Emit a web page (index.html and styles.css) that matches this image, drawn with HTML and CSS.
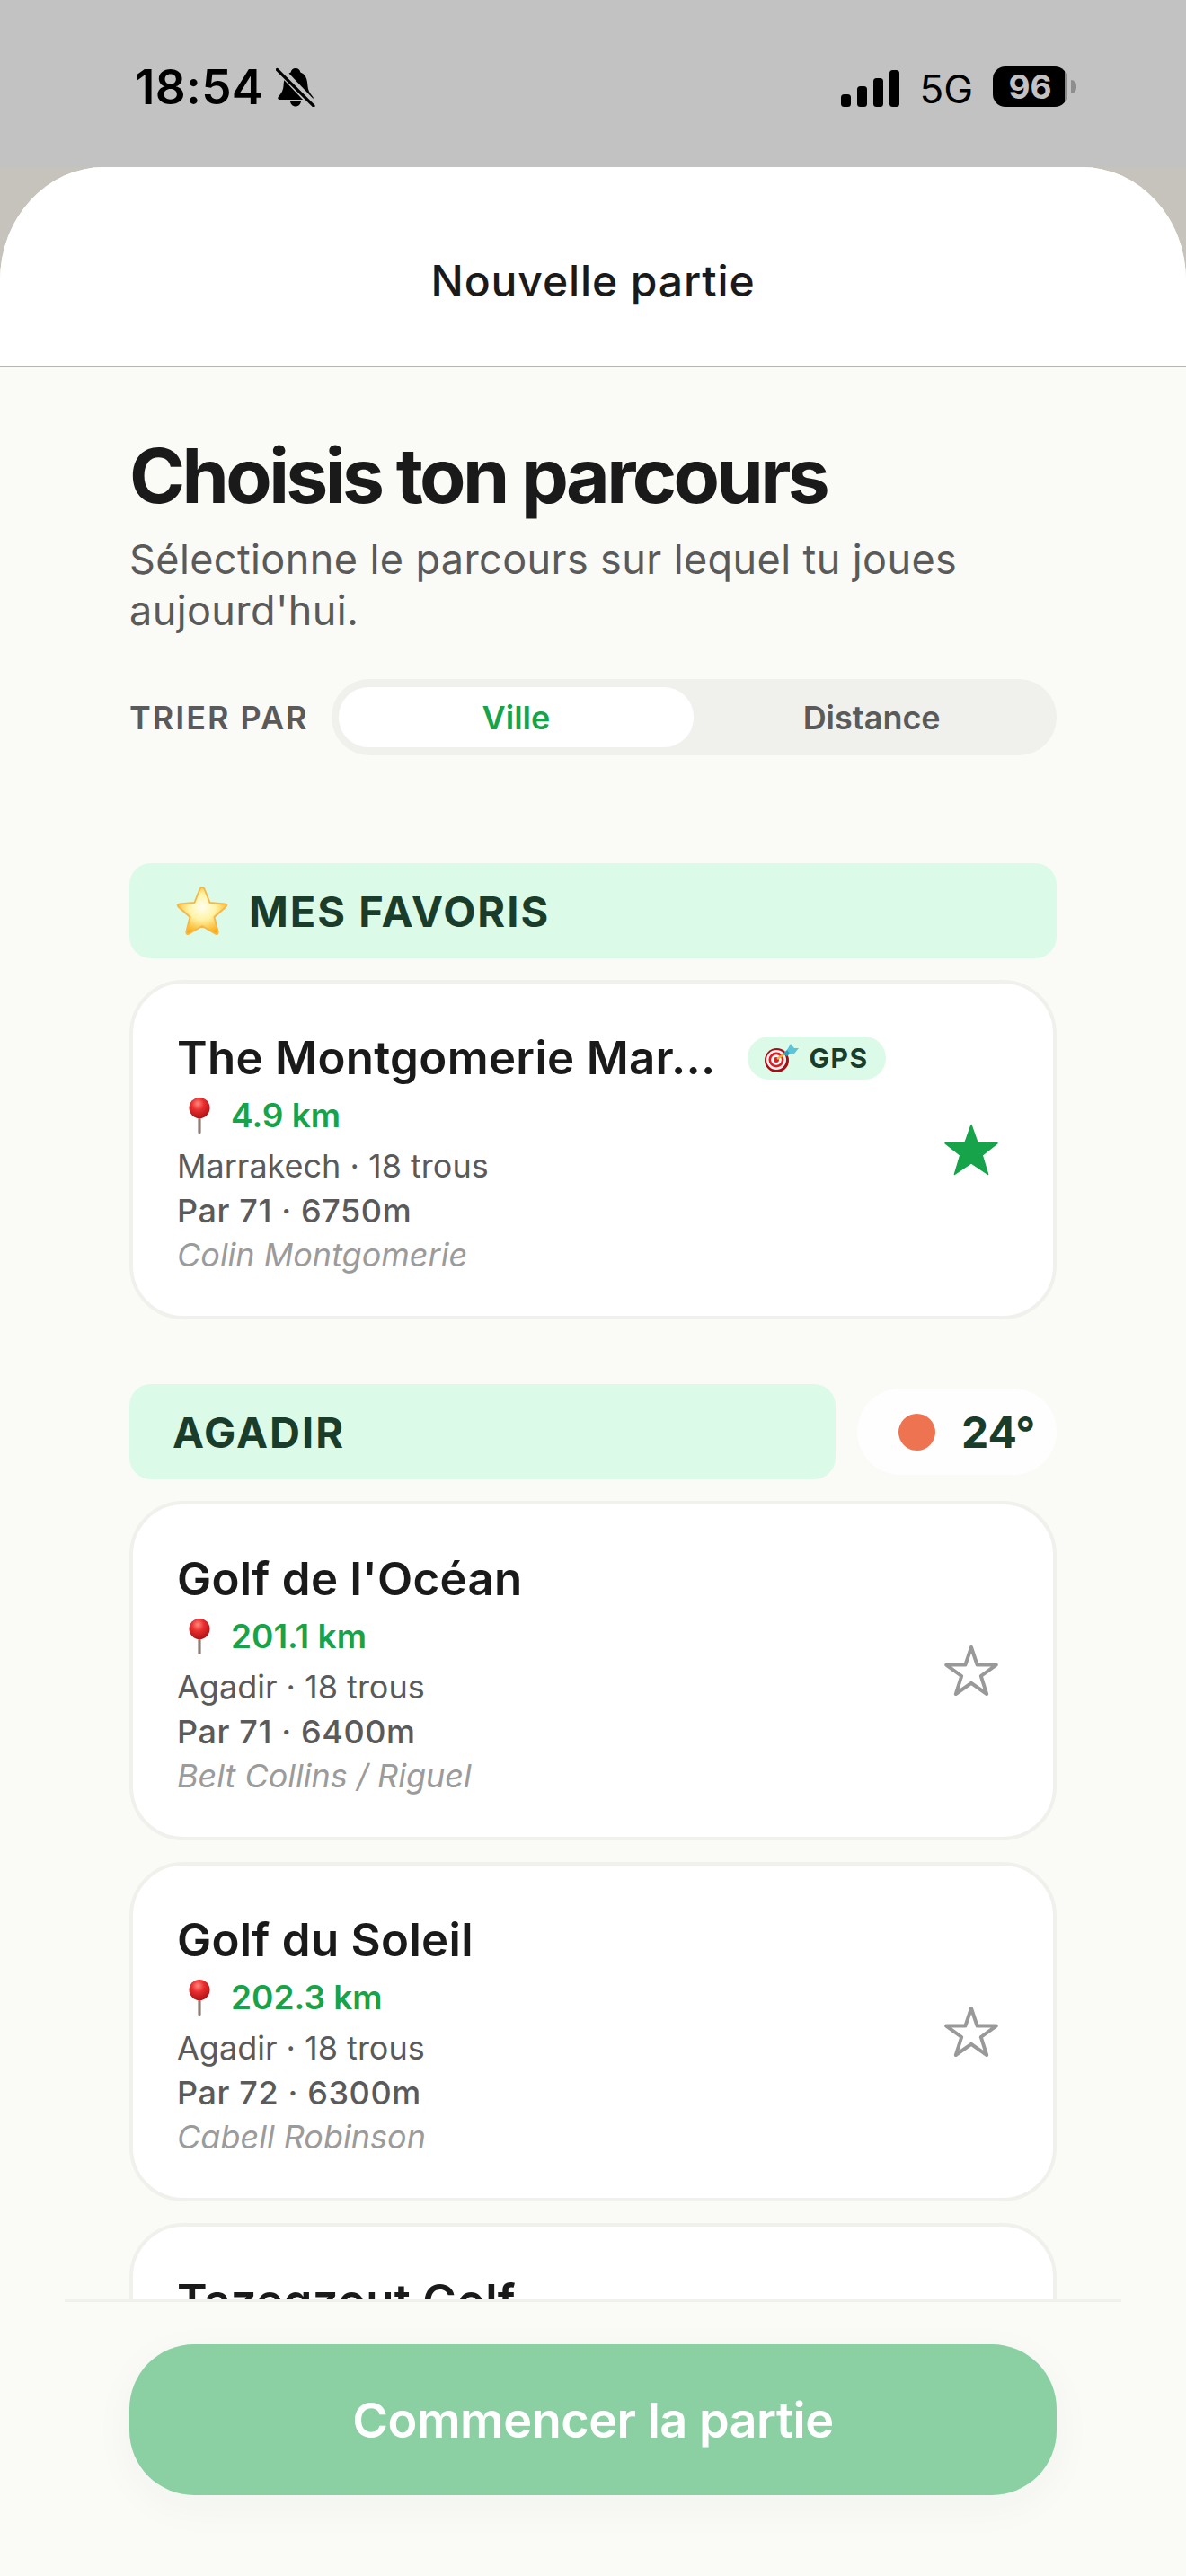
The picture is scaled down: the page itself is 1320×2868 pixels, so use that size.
FILE: index.html
```html
<!DOCTYPE html>
<html lang="fr">
<head>
  <meta charset="UTF-8">
  <meta name="viewport" content="width=device-width, initial-scale=1.0">
  <title>Nouvelle partie</title>
  <link rel="stylesheet" href="styles.css">
</head>
<body>

<svg class="defs" width="0" height="0">
  <defs>
    <radialGradient id="pinBall" cx="0.42" cy="0.3" r="0.75">
      <stop offset="0" stop-color="#ff8a80"/>
      <stop offset="0.4" stop-color="#ea2e2e"/>
      <stop offset="1" stop-color="#a50f14"/>
    </radialGradient>
    <radialGradient id="starFill" cx="0.5" cy="0.42" r="0.6">
      <stop offset="0" stop-color="#fffef0"/>
      <stop offset="0.45" stop-color="#fff4a8"/>
      <stop offset="1" stop-color="#f9a90f"/>
    </radialGradient>
    <symbol id="pin" viewBox="0 0 24 40">
      <rect x="10.4" y="18" width="3.2" height="22" rx="1.2" fill="#8b7d74"/>
      <circle cx="12" cy="11.5" r="11.5" fill="url(#pinBall)"/>
    </symbol>
    <symbol id="star-line" viewBox="0 0 62 58">
      <path d="M31 3 L37.6 22.6 L58.8 22.6 L41.8 35 L48.2 55 L31 42.8 L13.8 55 L20.2 35 L3.2 22.6 L24.4 22.6 Z" fill="none" stroke="#999" stroke-width="4" stroke-linejoin="round"/>
    </symbol>
  </defs>
</svg>

<div class="app">
  <div class="status-bar">
    <div class="status-left">
      <span class="clock">18:54</span>
      <svg class="bell" viewBox="0 0 44 44">
        <path d="M22 1c3 0 5 2 5.4 4.6C33 7.6 35 13 35.400 20c.3 5 2 8.500 5.600 12.500 1.500 1.700.6 3.500-1.500 3.500H4.500c-2.100 0-3-1.800-1.500-3.500C6.600 28.500 8.300 25 8.600 20 9 13 11 7.600 16.600 5.600 17 3 19 1 22 1z" fill="#000"/>
        <path d="M16 38h12c-.6 3.300-3 5.500-6 5.500s-5.400-2.200-6-5.500z" fill="#000"/>
        <path d="M3 1 L42 42" stroke="#c2c2c2" stroke-width="9"/>
        <path d="M1.500 2.500 L42 43" stroke="#000" stroke-width="3.200" stroke-linecap="round"/>
      </svg>
    </div>
    <div class="status-right">
      <svg class="signal" viewBox="0 0 65 41">
        <rect x="0" y="27" width="11" height="14" rx="3.500"/>
        <rect x="18" y="18" width="11" height="23" rx="3.500"/>
        <rect x="36" y="9" width="11" height="32" rx="3.500"/>
        <rect x="54" y="0" width="11" height="41" rx="3.500"/>
      </svg>
      <span class="network">5G</span>
      <span class="battery"><span class="battery-level">96</span></span>
    </div>
  </div>

  <div class="sheet">
    <header class="sheet-header">Nouvelle partie</header>

    <main class="content">
      <h1>Choisis ton parcours</h1>
      <p class="intro">Sélectionne le parcours sur lequel tu joues aujourd'hui.</p>

      <div class="sort-row">
        <span class="sort-label">TRIER PAR</span>
        <div class="segments">
          <button class="segment active">Ville</button>
          <button class="segment">Distance</button>
        </div>
      </div>

      <section class="group first">
        <div class="group-head">
          <h2 class="group-title">
            <svg class="emoji-star" viewBox="0 0 60 57">
              <path d="M30 2 Q32 2 33 5 L38.500 19 L55 20.500 Q59 21 56 24 L43.500 35 L47.500 51 Q48 55 44.500 53.500 L30 45 L15.500 53.500 Q12 55 12.500 51 L16.500 35 L4 24 Q1 21 5 20.500 L21.500 19 L27 5 Q28 2 30 2 Z" fill="url(#starFill)" stroke="#f5b84a" stroke-width="2" stroke-linejoin="round"/>
            </svg>
            MES FAVORIS
          </h2>
        </div>
        <article class="card">
          <div class="card-info">
            <div class="card-title-row">
              <h3 class="card-title">The Montgomerie Mar...</h3>
              <span class="gps-badge">
                <svg class="emoji-dart" viewBox="0 0 38 32">
                  <circle cx="13.500" cy="18.500" r="13.500" fill="#a80d16"/>
                  <circle cx="13" cy="18" r="11" fill="#f2f2f2"/>
                  <circle cx="13" cy="18" r="8.500" fill="#d81f26"/>
                  <circle cx="13" cy="18" r="5.800" fill="#fff"/>
                  <circle cx="13" cy="18" r="3" fill="#d81f26"/>
                  <path d="M14 17 L24 10" stroke="#e8b83a" stroke-width="2.600"/>
                  <path d="M20 11.500 L26 6 L29.500 10 L25 14 Z" fill="#2f9fbe"/>
                  <path d="M25 7 L29 0 L33 5 L38 5 L33 11 L28 11 Z" fill="#5cc4d8"/>
                </svg>
                GPS
              </span>
            </div>
            <div class="card-distance"><svg class="emoji-pin"><use href="#pin"/></svg>4.9 km</div>
            <div class="card-place">Marrakech · 18 trous</div>
            <div class="card-stats">Par 71 · 6750m</div>
            <div class="card-designer">Colin Montgomerie</div>
          </div>
          <svg class="fav-star" viewBox="0 0 62 58">
            <path d="M31 1.500 L38.200 21.800 L60 21.800 L43.200 35.200 L49.600 56.500 L31 44 L12.400 56.500 L18.800 35.200 L2 21.800 L23.800 21.800 Z" fill="#16a34a" stroke="#16a34a" stroke-width="1.500" stroke-linejoin="round"/>
          </svg>
        </article>
      </section>

      <section class="group">
        <div class="group-head">
          <h2 class="group-title">AGADIR</h2>
          <div class="weather"><span class="weather-dot"></span><span>24°</span></div>
        </div>
        <article class="card">
          <div class="card-info">
            <h3 class="card-title">Golf de l'Océan</h3>
            <div class="card-distance"><svg class="emoji-pin"><use href="#pin"/></svg>201.1 km</div>
            <div class="card-place">Agadir · 18 trous</div>
            <div class="card-stats">Par 71 · 6400m</div>
            <div class="card-designer">Belt Collins / Riguel</div>
          </div>
          <svg class="fav-star"><use href="#star-line"/></svg>
        </article>
        <article class="card">
          <div class="card-info">
            <h3 class="card-title">Golf du Soleil</h3>
            <div class="card-distance"><svg class="emoji-pin"><use href="#pin"/></svg>202.3 km</div>
            <div class="card-place">Agadir · 18 trous</div>
            <div class="card-stats">Par 72 · 6300m</div>
            <div class="card-designer">Cabell Robinson</div>
          </div>
          <svg class="fav-star"><use href="#star-line"/></svg>
        </article>
        <article class="card">
          <div class="card-info">
            <h3 class="card-title">Tazegzout Golf</h3>
          </div>
        </article>
      </section>
    </main>

    <footer class="footer">
      <button class="start-btn">Commencer la partie</button>
    </footer>
  </div>
</div>

</body>
</html>
```

FILE: styles.css
```css
* {
  box-sizing: border-box;
}

body {
  margin: 0;
  font-family: Inter, "Noto Sans", sans-serif;
  background-color: #c6c3bd;
  color: #1a1a1a;
}

.defs {
  position: absolute;
}

.app {
  display: flex;
  flex-direction: column;
  height: 2868px;
  overflow: hidden;
}

/* Status bar */
.status-bar {
  display: flex;
  justify-content: space-between;
  height: 186px;
  flex-shrink: 0;
  padding: 74px 132px 0 150px;
  background-color: #c2c2c2;
  color: #000;
}

.status-left,
.status-right {
  display: flex;
  height: 45px;
  align-items: center;
}

.clock {
  font-size: 53px;
  font-weight: 600;
  letter-spacing: 0.3px;
}

.bell {
  width: 44px;
  height: 44px;
  margin: 1px 0 0 14px;
}

.signal {
  width: 65px;
  height: 41px;
  margin-top: 4px;
}

.network {
  margin: 4px 0 0 22px;
  font-size: 44px;
  font-weight: 400;
}

.battery {
  position: relative;
  width: 83px;
  height: 45px;
  margin-left: 22px;
  border-radius: 14px;
  background: linear-gradient(to right, #000 96%, #8a8a8a 96%);
  text-align: center;
}

.battery::after {
  content: "";
  position: absolute;
  top: 15px;
  right: -10px;
  width: 6px;
  height: 15px;
  border-radius: 0 6px 6px 0;
  background-color: #8e8e8e;
}

.battery-level {
  font-size: 37px;
  font-weight: 700;
  line-height: 45px;
  color: #c2c2c2;
}

/* Sheet */
.sheet {
  display: flex;
  flex-direction: column;
  flex: 1;
  min-height: 0;
  border-radius: 116px 116px 0 0 / 126px 126px 0 0;
  overflow: hidden;
  background-color: #fafbf6;
}

.sheet-header {
  height: 223px;
  flex-shrink: 0;
  padding-top: 98px;
  border-bottom: 2px solid #b6b6b2;
  background-color: #fff;
  font-size: 48px;
  font-weight: 500;
  line-height: 58px;
  letter-spacing: 0.9px;
  text-align: center;
}

.content {
  flex: 1;
  min-height: 0;
  overflow: hidden;
  padding: 71px 144px 0;
}

h1 {
  margin: 0;
  font-size: 84px;
  font-weight: 700;
  line-height: 100px;
  letter-spacing: -3.6px;
}

.intro {
  margin: 14px 0 0;
  font-size: 45px;
  line-height: 57px;
  letter-spacing: 0.4px;
  color: #5a5a5a;
}

/* Sort control */
.sort-row {
  display: flex;
  align-items: center;
  gap: 25px;
  margin-top: 48px;
}

.sort-label {
  flex-shrink: 0;
  font-size: 36px;
  font-weight: 600;
  letter-spacing: 2px;
  color: #5a5a5a;
}

.segments {
  display: flex;
  flex: 1;
  height: 85px;
  padding: 9px 8px;
  border-radius: 42px;
  background-color: #f0f1ec;
}

.segment {
  flex: 1;
  border: none;
  border-radius: 33px;
  background: none;
  font-family: inherit;
  font-size: 36px;
  font-weight: 600;
  color: #5a5a5a;
}

.segment.active {
  background-color: #fff;
  color: #16a34a;
}

/* Groups */
.group {
  margin-top: 72px;
}

.group.first {
  margin-top: 120px;
}

.group-head {
  display: flex;
  align-items: center;
  gap: 24px;
  margin-bottom: 24px;
}

.group-title {
  display: flex;
  align-items: center;
  flex: 1;
  height: 106px;
  margin: 0;
  padding-left: 48px;
  border-radius: 24px;
  background-color: #dcfae8;
  font-size: 47px;
  font-weight: 700;
  letter-spacing: 2px;
  color: #1a3d2b;
}

.emoji-star {
  width: 60px;
  height: 57px;
  margin: 0 22px 0 3px;
}

.weather {
  display: flex;
  align-items: center;
  gap: 29px;
  width: 222px;
  height: 96px;
  flex-shrink: 0;
  padding-left: 46px;
  border-radius: 48px;
  background-color: #fefefe;
  font-size: 48px;
  font-weight: 700;
  color: #1a3d2b;
}

.weather-dot {
  width: 41px;
  height: 41px;
  border-radius: 50%;
  background-color: #ee7350;
}

/* Course cards */
.card {
  display: flex;
  align-items: center;
  justify-content: space-between;
  height: 378px;
  margin-bottom: 24px;
  padding: 0 60px 0 49px;
  border: 4.5px solid #f0f1ec;
  border-radius: 60px;
  background-color: #fff;
}

.card-info {
  align-self: flex-start;
  min-width: 0;
  padding-top: 50px;
}

.card-title-row {
  display: flex;
  align-items: center;
  gap: 35px;
}

.card-title {
  margin: 0;
  font-size: 51px;
  font-weight: 600;
  line-height: 66px;
  letter-spacing: 0.3px;
}

.gps-badge {
  display: flex;
  align-items: center;
  gap: 12px;
  height: 48px;
  padding: 0 19px;
  border-radius: 24px;
  background-color: #dcfae8;
  font-size: 30px;
  font-weight: 700;
  letter-spacing: 1.5px;
  color: #1a3d2b;
}

.emoji-dart {
  width: 38px;
  height: 32px;
}

.card-distance {
  display: flex;
  align-items: center;
  margin: 4px 0;
  font-size: 37px;
  font-weight: 600;
  line-height: 54px;
  color: #16a34a;
}

.emoji-pin {
  width: 24px;
  height: 40px;
  margin: 0 23px 0 13px;
}

.card-place {
  font-size: 36px;
  line-height: 50px;
  color: #5a5a5a;
}

.card-stats {
  font-size: 36px;
  font-weight: 500;
  line-height: 50px;
  letter-spacing: 0.6px;
  color: #5a5a5a;
}

.card-designer {
  font-size: 36px;
  font-style: italic;
  line-height: 48px;
  color: #9b9b9b;
}

.fav-star {
  width: 62px;
  height: 58px;
  flex-shrink: 0;
}

/* Footer */
.footer {
  flex-shrink: 0;
  height: 308px;
  margin: 0 72px;
  padding: 47px 72px 0;
  border-top: 3px solid #f0f1ec;
  background-color: #fafbf6;
}

.start-btn {
  display: block;
  width: 100%;
  height: 168px;
  border: none;
  border-radius: 72px;
  background-color: #8ad0a2;
  box-shadow: 0 12px 48px rgba(26, 61, 43, 0.04);
  font-family: inherit;
  font-size: 54px;
  font-weight: 600;
  letter-spacing: -0.5px;
  color: #fff;
}
```
